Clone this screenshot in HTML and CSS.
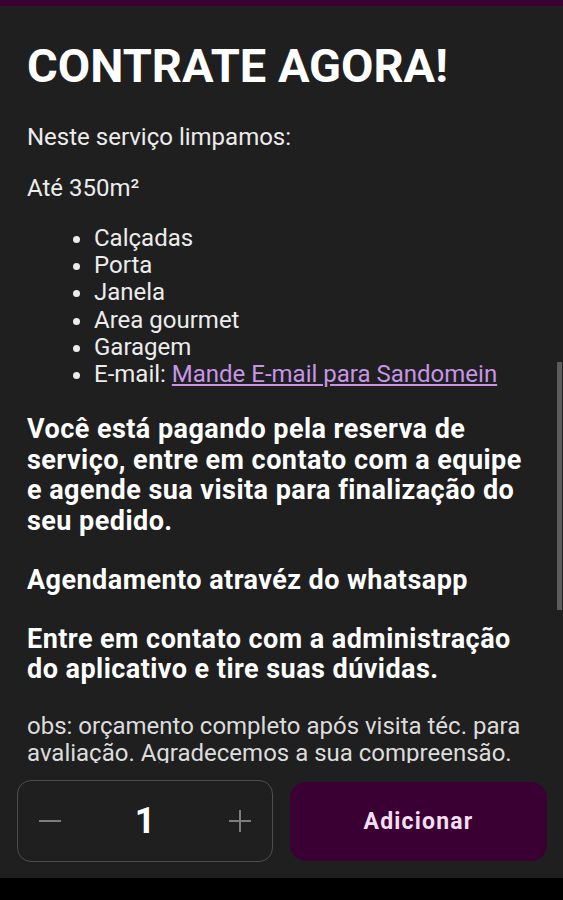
FILE: index.html
```html
<!doctype html>
<html lang="pt-BR">
  <head>
    <meta charset="UTF-8" />
    <meta name="viewport" content="width=device-width, initial-scale=1.0" />
    <link rel="stylesheet" href="styles.css">
    <title>Contrate agora</title>
  </head>
  <body>
    <div class="topbar"></div>

    <main class="content">
      <h1 class="title">CONTRATE AGORA!</h1>
      <p class="text">Neste serviço limpamos:</p>
      <p class="text">Até 350m²</p>
      <ul class="items">
        <li>Calçadas</li>
        <li>Porta</li>
        <li>Janela</li>
        <li>Area gourmet</li>
        <li>Garagem</li>
        <li>E-mail: <a href="#">Mande E-mail para Sandomein</a></li>
      </ul>
      <p class="strong">Você está pagando pela reserva de serviço, entre em contato com a equipe e agende sua visita para finalização do seu pedido.</p>
      <p class="strong">Agendamento atravéz do whatsapp</p>
      <p class="strong">Entre em contato com a administração do aplicativo e tire suas dúvidas.</p>
      <p class="note">obs: orçamento completo após visita téc. para avaliação. Agradecemos a sua compreensão.</p>
      <div class="thumb"></div>
    </main>

    <footer class="actions">
      <div class="qty">
        <button class="step" aria-label="Diminuir">
          <svg width="24" height="24" viewBox="0 0 24 24"><path d="M1 12h22" stroke="currentColor" stroke-width="2" fill="none"/></svg>
        </button>
        <span class="count">1</span>
        <button class="step" aria-label="Aumentar">
          <svg width="24" height="24" viewBox="0 0 24 24"><path d="M1 12h22M12 1v22" stroke="currentColor" stroke-width="2" fill="none"/></svg>
        </button>
      </div>
      <button class="add">Adicionar</button>
    </footer>

    <div class="navbar"></div>
  </body>
</html>
```

FILE: styles.css
```css
body {
  margin: 0;
  background-color: #000;
  font-family: Roboto, "Noto Sans", sans-serif;
  color: #ececec;
}

.topbar {
  height: 6px;
  background-color: #3a0033;
}

/* scrolling area */
.content {
  position: relative;
  height: 757px;
  overflow: hidden;
  padding: 33px 27px 0;
  box-sizing: border-box;
  background-color: #1f1f1f;
}

.title {
  margin: 0 0 30px;
  font-size: 47px;
  line-height: 54px;
  font-weight: 700;
  color: #fff;
}

.text {
  margin: 0 0 23px;
  font-size: 24px;
  line-height: 28px;
}

.items {
  margin: 0 0 26px;
  padding-left: 67px;
  font-size: 24px;
  line-height: 27.2px;
}

.items a {
  color: #c795e6;
}

.strong {
  margin: 0 0 28.5px;
  font-size: 27px;
  line-height: 30.5px;
  font-weight: 700;
  letter-spacing: 0.45px;
  color: #fff;
}

.note {
  margin: 0;
  font-size: 24px;
  line-height: 27px;
  color: #dcdcdc;
}

.thumb {
  position: absolute;
  top: 356px;
  right: 1px;
  width: 5px;
  height: 248px;
  background-color: #5c5c5c;
}

/* bottom bar */
.actions {
  display: flex;
  gap: 17px;
  height: 115px;
  padding: 17px 16px 0 17px;
  box-sizing: border-box;
  background-color: #1f1f1f;
}

.qty {
  display: flex;
  align-items: center;
  justify-content: space-between;
  width: 256px;
  height: 82px;
  padding: 0 20px;
  border: 1.5px solid #4e4e4e;
  border-radius: 14px;
  box-sizing: border-box;
}

.step {
  display: flex;
  padding: 0;
  border: 0;
  background: none;
  color: #7d7d7d;
}

.count {
  font-size: 36px;
  font-weight: 700;
  color: #fff;
}

.add {
  flex: 1;
  height: 79px;
  margin-top: 2px;
  border: 0;
  border-radius: 16px;
  background-color: #3a0033;
  font-family: inherit;
  font-size: 23px;
  font-weight: 700;
  letter-spacing: 1.2px;
  color: #f4dff1;
}

.navbar {
  height: 22px;
  background-color: #000;
}
```
